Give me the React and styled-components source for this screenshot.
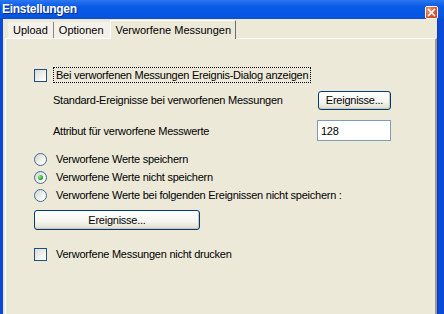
import styled, { createGlobalStyle } from "styled-components";

const GlobalStyle = createGlobalStyle`
  html, body {
    margin: 0;
    padding: 0;
    background: #0b4ad8;
  }
  body {
    font-family: "Liberation Sans", Arial, sans-serif;
    font-size: 11px;
    color: #000;
  }
`

const Window = styled.div`
  width: 444px;
  height: 314px;
  overflow: hidden;
  display: flex;
  flex-direction: column;
  background: #0b4ad8;
`

const TitleBar = styled.div`
  flex: none;
  height: 19px;
  display: flex;
  align-items: flex-start;
  justify-content: space-between;
  padding: 0 6px 0 2px;
  background: linear-gradient(#2a78f0, #0a5ae8 35%, #0656e4 80%, #0a50d6);
  color: #fff;

  h1 {
    margin: 2px 0 0;
    font-size: 12px;
    font-weight: 700;
    letter-spacing: -0.3px;
    line-height: 15px;
    text-shadow: 1px 1px 0 #0a2a8a;
  }
`

const CloseButton = styled.div`
  margin-top: 6px;
  width: 11px;
  height: 11px;
  border: 1px solid #fff;
  border-radius: 2px;
  background: radial-gradient(circle at 30% 30%, #f29a78, #e0512a 55%, #c93a14);
  display: flex;
  align-items: center;
  justify-content: center;
`

const Client = styled.div`
  flex: none;
  height: 320px;
  margin: 0 6px 0 3px;
  background: #ece9d8;
  display: flex;
  flex-direction: column;
  border-right: 1px solid #0a3cc0;
`

const TabRow = styled.div`
  flex: none;
  height: 19px;
  display: flex;
  align-items: flex-end;
  padding-left: 5px;
`

const Tab = styled.div`
  height: ${p => p.$active ? '19px' : '16px'};
  box-sizing: border-box;
  display: flex;
  align-items: center;
  padding: ${p => p.$active ? '0 4px 1px 5px' : '0 5px 0 5px'};
  background: ${p => p.$active ? '#ece9d8' : '#f3f1e9'};
  border-left: ${p => p.$active ? '1px solid #fff' : 'none'};
  border-right: 1px solid ${p => p.$active ? '#716f64' : (p.$sep ? '#8a887c' : 'transparent')};
  border-top: ${p => p.$active ? '1px solid #fff' : 'none'};
  margin-bottom: ${p => p.$active ? '-1px' : '0'};
  position: relative;
  z-index: ${p => p.$active ? 1 : 0};
  white-space: nowrap;
`

const Panel = styled.div`
  flex: 1;
  margin-left: 2px;
  border-top: 1px solid #fff;
  border-left: 1px solid #fff;
  border-right: 2px solid #9d9b8f;
  margin-right: 0;
  display: flex;
  flex-direction: column;
  padding: 28px 0 0 28px;
  letter-spacing: -0.25px;
`

const Row = styled.div`
  display: flex;
  align-items: center;
  height: ${p => p.$h || 16}px;
  margin-top: ${p => p.$mt || 0}px;
  padding-left: ${p => p.$indent || 0}px;
  white-space: nowrap;
`

const FieldRow = styled.div`
  display: grid;
  grid-template-columns: 265px auto;
  align-items: center;
  height: ${p => p.$h || 20}px;
  margin-top: ${p => p.$mt || 0}px;
  padding-left: 19px;
  white-space: nowrap;
`

const CheckBox = styled.span`
  flex: none;
  width: 13px;
  height: 13px;
  box-sizing: border-box;
  border: 1px solid #1c5180;
  background: linear-gradient(135deg, #dcdcd4, #f6f6f2 70%, #fff);
  margin-right: 6px;
`

const Radio = styled.span`
  flex: none;
  width: 13px;
  height: 13px;
  box-sizing: border-box;
  border-radius: 50%;
  border: 1px solid #3f6a96;
  background: linear-gradient(135deg, #d6d6cf, #f5f5f1 65%, #fff);
  margin-right: 9px;
  display: flex;
  align-items: center;
  justify-content: center;

  &::after {
    content: '';
    display: ${p => p.$checked ? 'block' : 'none'};
    width: 5px;
    height: 5px;
    border-radius: 50%;
    background: radial-gradient(circle at 35% 35%, #8ef08e, #28a828 60%, #1a8a1a);
  }
`

const FocusLabel = styled.span`
  border: 1px dotted #000;
  padding: 1px 2px 1px 2px;
  line-height: 12px;
`

const Button = styled.button`
  font: inherit;
  letter-spacing: inherit;
  color: #000;
  width: ${p => p.$w}px;
  height: ${p => p.$h || 19}px;
  padding: 0;
  border: 1px solid #003c74;
  border-radius: 3px;
  background: linear-gradient(#ffffff, #f5f4ee 60%, #e6e2d4 90%, #d8d2c2);
  box-shadow: inset -1px -1px 0 #cdc8b8;
`

const Input = styled.div`
  width: 74px;
  height: 21px;
  box-sizing: border-box;
  border: 1px solid #7f9db9;
  background: #fff;
  padding-left: 3px;
  display: flex;
  align-items: center;
`

export default function App() {
  return (
    <>
      <GlobalStyle />
      <Window>
        <TitleBar>
          <h1>Einstellungen</h1>
          <CloseButton>
            <svg width="9" height="9" viewBox="0 0 9 9">
              <path d="M1.5 1.5 L7.5 7.5 M7.5 1.5 L1.5 7.5" stroke="#fff" strokeWidth="1.6" strokeLinecap="square" />
            </svg>
          </CloseButton>
        </TitleBar>
        <Client>
          <TabRow>
            <Tab $sep>Upload</Tab>
            <Tab>Optionen</Tab>
            <Tab $active>Verworfene Messungen</Tab>
          </TabRow>
          <Panel>
            <Row>
              <CheckBox />
              <FocusLabel>Bei verworfenen Messungen Ereignis-Dialog anzeigen</FocusLabel>
            </Row>
            <FieldRow $mt={7}>
              <span>Standard-Ereignisse bei verworfenen Messungen</span>
              <Button $w={73}>Ereignisse...</Button>
            </FieldRow>
            <FieldRow $mt={10} $h={21}>
              <span>Attribut für verworfene Messwerte</span>
              <Input style={{ marginLeft: -1 }}>128</Input>
            </FieldRow>
            <Row $h={18} $mt={9}>
              <Radio />
              Verworfene Werte speichern
            </Row>
            <Row $h={18}>
              <Radio $checked />
              Verworfene Werte nicht speichern
            </Row>
            <Row $h={18}>
              <Radio />
              Verworfene Werte bei folgenden Ereignissen nicht speichern :
            </Row>
            <Row $h={20} $mt={6}>
              <Button $w={166} $h={20}>Ereignisse...</Button>
            </Row>
            <Row $mt={16}>
              <CheckBox style={{ marginRight: 9 }} />
              Verworfene Messungen nicht drucken
            </Row>
          </Panel>
        </Client>
      </Window>
    </>
  )
}
